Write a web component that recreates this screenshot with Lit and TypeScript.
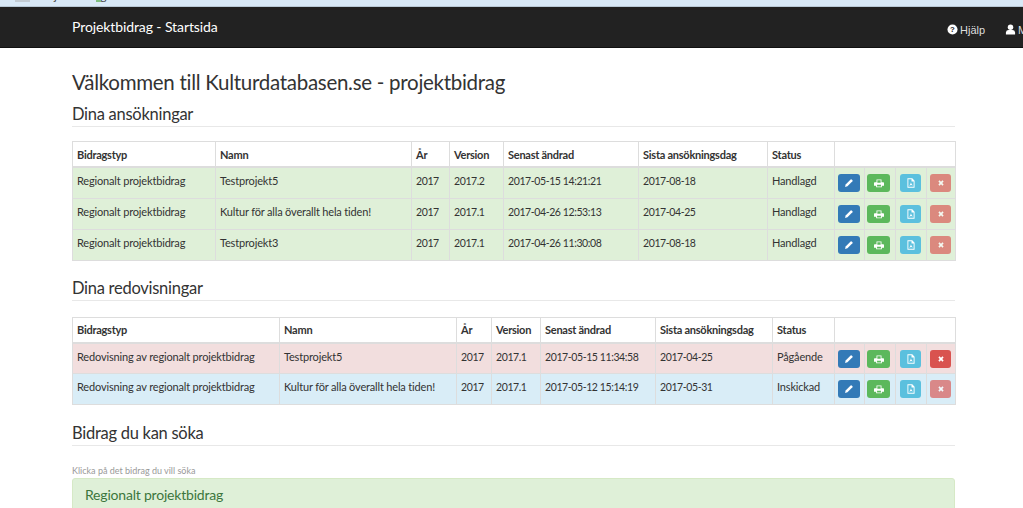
import { LitElement, html, css, svg } from "lit";
import { customElement } from "lit/decorators.js";

const pencil = svg`<path d="M1.500 12.500 2.300 9.200 9.300 2.200a1 1 0 0 1 1.400 0l1.100 1.100a1 1 0 0 1 0 1.400L4.800 11.700Z" fill="currentColor"/>`;
const printer = svg`<path fill-rule="evenodd" d="M3.500 2h7v4H13a1 1 0 0 1 1 1v4h-3v2H3v-2H0V7a1 1 0 0 1 1-1h2.500Zm1.200 1.200V6.500h4.600V3.200ZM4.300 9.500v2.300h5.400V9.500Z" fill="currentColor"/>`;
const file = svg`<path fill-rule="evenodd" d="M2 0.500h6.800L12 3.700V13.500H2ZM3.300 1.800V12.200h7.400V5H7.700V1.800ZM4.500 11l1.800-2.800.6-2.400.8 2.400 1.800 2.200-2.500-.5Z" fill="currentColor"/>`;
const times = svg`<path d="M3.300 5 5 3.300 7 5.300 9 3.300 10.700 5 8.700 7 10.700 9 9 10.700 7 8.700 5 10.700 3.300 9 5.300 7Z" fill="currentColor"/>`;

const icon = (p: unknown) => html`<svg class="ic" viewBox="0 0 14 14">${p}</svg>`;

type Row = { c: string[]; tone: string; del: boolean };

const t1: Row[] = [
  { c: ["Regionalt projektbidrag", "Testprojekt5", "2017", "2017.2", "2017-05-15 14:21:21", "2017-08-18", "Handlagd"], tone: "ok", del: false },
  { c: ["Regionalt projektbidrag", "Kultur för alla överallt hela tiden!", "2017", "2017.1", "2017-04-26 12:53:13", "2017-04-25", "Handlagd"], tone: "ok", del: false },
  { c: ["Regionalt projektbidrag", "Testprojekt3", "2017", "2017.1", "2017-04-26 11:30:08", "2017-08-18", "Handlagd"], tone: "ok", del: false },
];
const t2: Row[] = [
  { c: ["Redovisning av regionalt projektbidrag", "Testprojekt5", "2017", "2017.1", "2017-05-15 11:34:58", "2017-04-25", "Pågående"], tone: "bad", del: true },
  { c: ["Redovisning av regionalt projektbidrag", "Kultur för alla överallt hela tiden!", "2017", "2017.1", "2017-05-12 15:14:19", "2017-05-31", "Inskickad"], tone: "info", del: false },
];
const heads = ["Bidragstyp", "Namn", "År", "Version", "Senast ändrad", "Sista ansökningsdag", "Status"];

@customElement("app-root")
export class AppRoot extends LitElement {
  static styles = css`
    :host { display: block; height: 508px; overflow: hidden; background: #fff; font-family: "Lato", "Open Sans", sans-serif; color: #333; }
    .chrome { height: 7px; background: #d9e9f7; overflow: hidden; font-size: 12px; line-height: 7px; color: #444; padding-left: 15px; border-bottom: 1px solid #b9c9d6; box-sizing: border-box; display: flex; align-items: flex-start; }
    .chrome span { display: block; margin-top: -8px; }
    .chrome i { display: block; flex: none; }
    .chrome .fav { width: 15px; height: 2px; margin-right: 6px; background: #c3ccd4; }
    .chrome .dot { width: 5px; height: 2px; margin-left: -10px; background: #7fbf7f; }
    .nav { height: 41px; background: #222; border-bottom: 1px solid #111; box-sizing: border-box; display: flex; align-items: center; color: #fff; overflow: hidden; padding-left: 72px; }
    .brand { flex: 0 0 875px; font-size: 14px; letter-spacing: -0.1px; margin-top: -1px; }
    .links { display: flex; flex: none; gap: 20px; font-family: "Liberation Sans", sans-serif; font-size: 11px; color: #ddd; margin-top: 5px; white-space: nowrap; }
    .links span { display: inline-flex; align-items: center; gap: 2px; }
    .links svg { width: 11px; height: 11px; color: #fff; }
    .main { padding: 0 68px 0 72px; }
    h1 { font-weight: 400; font-size: 20.500px; letter-spacing: -0.28px; line-height: 26px; margin: 21px 0 0; color: #333; }
    h2 { font-weight: 400; font-size: 16.500px; letter-spacing: -0.27px; line-height: 22px; margin: 0; padding-bottom: 1px; color: #333; border-bottom: 1px solid #e8e8e8; }
    h1 + h2 { margin-top: 8px; }
    table { border-collapse: collapse; table-layout: fixed; width: 883px; font-size: 11px; letter-spacing: -0.17px; margin-top: 16px; }
    h1 + h2 + table { margin-top: 14px; }
    th, td { border: 1px solid #ddd; padding: 0 0 0 4px; text-align: left; white-space: nowrap; overflow: hidden; }
    th { height: 24px; font-weight: 700; color: #333; background: #fff; border-bottom-width: 2px; letter-spacing: -0.25px; }
    td { height: 31px; vertical-align: top; padding-top: 6px; line-height: 14px; box-sizing: border-box; color: #333; }
    td.num { font-size: 10.500px; letter-spacing: -0.4px; }
    tr.ok td { background: #dff0d8; }
    tr.bad td { background: #f2dede; }
    tr.info td { background: #d9edf7; }
    td.b { padding: 6px 0 0 4px; }
    td.b.p { padding-left: 3px; }
    td.b.s { padding-left: 2px; }
    td.b.d { padding-left: 3px; }
    .btn { display: flex; align-items: center; justify-content: center; height: 18px; width: 21px; border-radius: 3px; color: #fff; }
    .ic { width: 10px; height: 10px; }
    .pri { background: #337ab7; width: 22px; }
    .suc { background: #5cb85c; width: 23px; }
    .inf { background: #5bc0de; }
    .dan { background: #d9534f; }
    .off { opacity: .65; }
    .sec2 { margin-top: 16px; }
    .sec3 { margin-top: 17px; }
    .hint { font-size: 9px; line-height: 11px; color: #999; margin-top: 19px; }
    .panel { margin-top: 2px; background: #dff0d8; border: 1px solid #d6e9c6; border-radius: 3px; height: 60px; padding: 7px 12px; box-sizing: border-box; color: #3c763d; font-size: 14px; letter-spacing: -0.2px; line-height: 18px; }
  `;

  private table(rows: Row[], cols: number[]) {
    return html`<table>
      <colgroup>${cols.map((w) => html`<col style="width:${w}px" />`)}</colgroup>
      <thead><tr>${heads.map((h) => html`<th>${h}</th>`)}<th colspan="4"></th></tr></thead>
      <tbody>
        ${rows.map(
          (r) => html`<tr class=${r.tone}>
            ${r.c.map((c, i) => html`<td class=${i >= 2 && i <= 5 ? "num" : ""}>${c}</td>`)}
            <td class="b p"><div class="btn pri">${icon(pencil)}</div></td>
            <td class="b s"><div class="btn suc">${icon(printer)}</div></td>
            <td class="b"><div class="btn inf">${icon(file)}</div></td>
            <td class="b d"><div class="btn dan ${r.del ? "" : "off"}">${icon(times)}</div></td>
          </tr>`
        )}
      </tbody>
    </table>`;
  }

  render() {
    return html`
      <div class="chrome"><i class="fav"></i><span>Projektbidrag</span><i class="dot"></i></div>
      <div class="nav">
        <div class="brand">Projektbidrag - Startsida</div>
        <div class="links">
          <span><svg viewBox="0 0 12 12"><circle cx="6" cy="6" r="5.500" fill="currentColor"/><text x="6" y="9" font-size="8.500" font-weight="700" text-anchor="middle" fill="#222">?</text></svg>Hjälp</span>
          <span><svg viewBox="0 0 12 12"><circle cx="6" cy="3.500" r="3" fill="currentColor"/><path d="M1 11.500V9a3 3 0 0 1 3-2.500h4A3 3 0 0 1 11 9v2.500Z" fill="currentColor"/></svg>Mitt konto</span>
        </div>
      </div>
      <div class="main">
        <h1>Välkommen till Kulturdatabasen.se - projektbidrag</h1>
        <h2>Dina ansökningar</h2>
        ${this.table(t1, [143, 196, 38, 54, 135, 129, 67, 30, 31, 31, 29])}
        <h2 class="sec2">Dina redovisningar</h2>
        ${this.table(t2, [207, 177, 35, 49, 115, 117, 62, 30, 31, 31, 29])}
        <h2 class="sec3">Bidrag du kan söka</h2>
        <div class="hint">Klicka på det bidrag du vill söka</div>
        <div class="panel">Regionalt projektbidrag</div>
      </div>
    `;
  }
}
